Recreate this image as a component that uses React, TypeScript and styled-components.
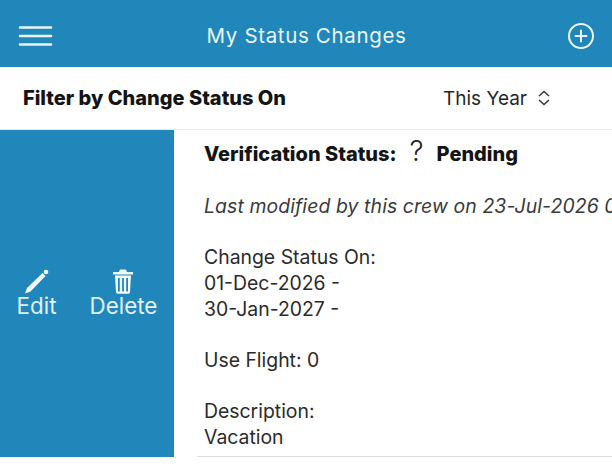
import styled, { createGlobalStyle } from 'styled-components'

const GlobalStyle = createGlobalStyle`
  html, body {
    margin: 0;
    padding: 0;
    background: #ffffff;
    overflow: hidden;
  }
  body {
    font-family: 'Inter', 'Liberation Sans', sans-serif;
  }
`

const Screen = styled.div`
  width: 612px;
  height: 476px;
  display: flex;
  flex-direction: column;
  overflow: hidden;
  background: #ffffff;
`

const Header = styled.header`
  height: 67px;
  flex-shrink: 0;
  box-sizing: border-box;
  background: #2186b9;
  display: flex;
  align-items: center;
  justify-content: space-between;
  padding: 4px 17px 0 18px;
  color: #e9f5fa;
`

const HeaderIcon = styled.svg`
  display: block;
  fill: none;
  stroke: #e9f5fa;
`

const Title = styled.h1`
  margin: 0 0 0 -8px;
  font-size: 20.5px;
  font-weight: 400;
  letter-spacing: 0.65px;
`

const FilterBar = styled.div`
  height: 62px;
  flex-shrink: 0;
  display: flex;
  align-items: center;
  padding-left: 23px;
  border-bottom: 1px solid #e9e9e9;
`

const FilterLabel = styled.div`
  width: 420px;
  font-size: 20px;
  font-weight: 800;
  color: #141414;
  white-space: nowrap;
`

const FilterValue = styled.div`
  display: flex;
  align-items: center;
  gap: 10px;
  font-size: 19px;
  color: #262626;
`

const Row = styled.div`
  display: flex;
  height: 327px;
  flex-shrink: 0;
`

const Actions = styled.div`
  width: 174px;
  flex-shrink: 0;
  background: #2186b9;
  display: flex;
  align-items: center;
  justify-content: center;
  gap: 33px;
`

const Action = styled.div`
  display: flex;
  flex-direction: column;
  align-items: center;
  color: #e2f1f8;
  font-size: 22.4px;
  line-height: 24px;
`

const ActionIcon = styled.svg`
  display: block;
  fill: #f2f9fc;
`

const Details = styled.div`
  flex: 1;
  min-width: 0;
  margin-left: 23px;
  padding: 9px 0 0 7px;
  border-bottom: 1px solid #dddddd;
  overflow: hidden;
`

const StatusLine = styled.div`
  display: flex;
  align-items: center;
  height: 30px;
  font-size: 20px;
  font-weight: 800;
  color: #141414;
  white-space: nowrap;
`

const StatusMark = styled.span`
  font-size: 28px;
  font-weight: 300;
  margin: -6px 13px 0 13px;
  color: #222222;
`

const Line = styled.div<{ $gap?: number }>`
  margin-top: ${p => p.$gap ?? 0}px;
  font-size: 19.4px;
  line-height: 26px;
  color: #2a2a2a;
  white-space: nowrap;
`

const Modified = styled(Line)`
  font-style: italic;
  letter-spacing: 0.1px;
  color: #3a3a3a;
`

export default function App() {
  return (
    <Screen>
      <GlobalStyle />
      <Header>
        <HeaderIcon width="36" height="24" viewBox="0 0 36 24" strokeWidth="2.6" strokeLinecap="round">
          <path d="M2 3.500H33M2 12H33M2 20.500H33" />
        </HeaderIcon>
        <Title>My Status Changes</Title>
        <HeaderIcon width="28" height="28" viewBox="0 0 28 28" strokeWidth="2">
          <circle cx="14" cy="14" r="12" />
          <path d="M14 8.500V19.500M8.500 14H19.500" strokeLinecap="round" />
        </HeaderIcon>
      </Header>
      <FilterBar>
        <FilterLabel>Filter by Change Status On</FilterLabel>
        <FilterValue>
          This Year
          <svg width="14" height="16" viewBox="0 0 14 16" fill="none" stroke="#333333" strokeWidth="1.4">
            <path d="M2 6L7 1.500L12 6M2 10L7 14.500L12 10" />
          </svg>
        </FilterValue>
      </FilterBar>
      <Row>
        <Actions>
          <Action>
            <ActionIcon width="26" height="25" viewBox="0 0 26 25">
              <path d="M1 24.500L3 19L18.500 4L21.500 7L6.500 22.500Z" />
              <circle cx="22" cy="3" r="2.300" />
            </ActionIcon>
            Edit
          </Action>
          <Action>
            <ActionIcon width="22" height="25" viewBox="0 0 22 25">
              <path
                fillRule="evenodd"
                d="M8 .5H14L15 3H21V5.500H1V3H7ZM3 6.500H19L18 23C18 24 17 24.800 16 24.800H6C5 24.800 4 24 4 23ZM6 9V22.500H7.800V9ZM10.100 9V22.500H11.900V9ZM14.200 9V22.500H16V9Z"
              />
            </ActionIcon>
            Delete
          </Action>
        </Actions>
        <Details>
          <StatusLine>
            Verification Status:
            <StatusMark>?</StatusMark>
            Pending
          </StatusLine>
          <Modified $gap={24}>Last modified by this crew on 23-Jul-2026 09:41</Modified>
          <Line $gap={25}>Change Status On:</Line>
          <Line>01-Dec-2026 -</Line>
          <Line>30-Jan-2027 -</Line>
          <Line $gap={25}>Use Flight: 0</Line>
          <Line $gap={25}>Description:</Line>
          <Line>Vacation</Line>
        </Details>
      </Row>
    </Screen>
  )
}
